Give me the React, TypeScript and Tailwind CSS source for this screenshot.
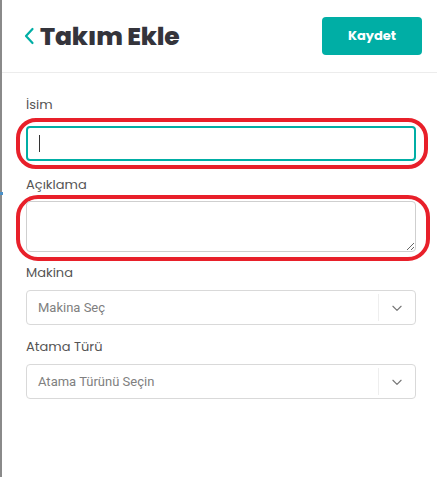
import React from "react";

function Chevron() {
  return (
    <svg className="w-[14px] h-[14px] text-[#777]" viewBox="0 0 24 24" fill="none" stroke="currentColor" strokeWidth={2} strokeLinecap="round" strokeLinejoin="round">
      <path d="M5 9l7 7 7-7" />
    </svg>
  );
}

function SelectBox({ placeholder }: { placeholder: string }) {
  return (
    <div className="flex h-[35px] items-center rounded-[4px] border border-[#d9d9d9] bg-white">
      <span className="flex-1 pl-[11px] text-[13px] text-[#808080] font-['Roboto',sans-serif]">{placeholder}</span>
      <div className="flex h-[27px] w-[37px] items-center justify-center border-l border-[#eeeeee]">
        <Chevron />
      </div>
    </div>
  );
}

export default function App() {
  return (
    <div className="relative min-h-[477px] w-[437px] border-l-2 border-[#8a8a8a] bg-white font-['Poppins','Inter',sans-serif]">
      {/* tiny blue mark at the left edge */}
      <div className="absolute left-[-2px] top-[192px] h-[3px] w-[3px] bg-[#4a90c8]" />

      {/* Header */}
      <div className="flex h-[73px] items-center justify-between border-b border-[#ececec] pl-[21px] pr-[15px]">
        <div className="flex items-center gap-[5px]">
          <svg className="h-[18px] w-[12px] text-[#00aea5]" viewBox="0 0 12 18" fill="none" stroke="currentColor" strokeWidth={2.2} strokeLinecap="round" strokeLinejoin="round">
            <path d="M9.5 2L3 9l6.5 7" />
          </svg>
          <h1 className="text-[25px] font-extrabold tracking-[-0.2px] text-[#34343b] leading-none">Takım Ekle</h1>
        </div>
        <button className="h-[38px] w-[100px] rounded-[4px] bg-[#00aea5] text-[13px] font-bold text-white">Kaydet</button>
      </div>

      {/* Form */}
      <div className="flex flex-col pl-[24px] pr-[21px] pt-[23px] text-[13px] text-[#555555]">
        <label className="mb-[12px] leading-[18px]">İsim</label>
        <div className="relative">
          <div className="absolute -left-[10px] -right-[12px] -top-[8px] -bottom-[8px] rounded-[20px] border-[4px] border-[#e8202a]" />
          <div className="relative flex h-[35px] items-center rounded-[4px] border-2 border-[#00aea5] pl-[11px]">
            <div className="h-[17px] w-px bg-[#333]" />
          </div>
        </div>

        <label className="mb-[7px] mt-[15px] leading-[18px]">Açıklama</label>
        <div className="relative">
          <div className="absolute -left-[10px] -right-[14px] -top-[6px] -bottom-[9px] rounded-[22px] border-[4px] border-[#e8202a]" />
          <textarea className="relative block h-[51px] w-full resize-y rounded-[4px] border border-[#cfcfcf] bg-white" />
        </div>

        <label className="mb-[8px] mt-[12px] leading-[18px]">Makina</label>
        <SelectBox placeholder="Makina Seç" />

        <label className="mb-[8px] mt-[13px] leading-[18px]">Atama Türü</label>
        <SelectBox placeholder="Atama Türünü Seçin" />
      </div>
    </div>
  );
}
